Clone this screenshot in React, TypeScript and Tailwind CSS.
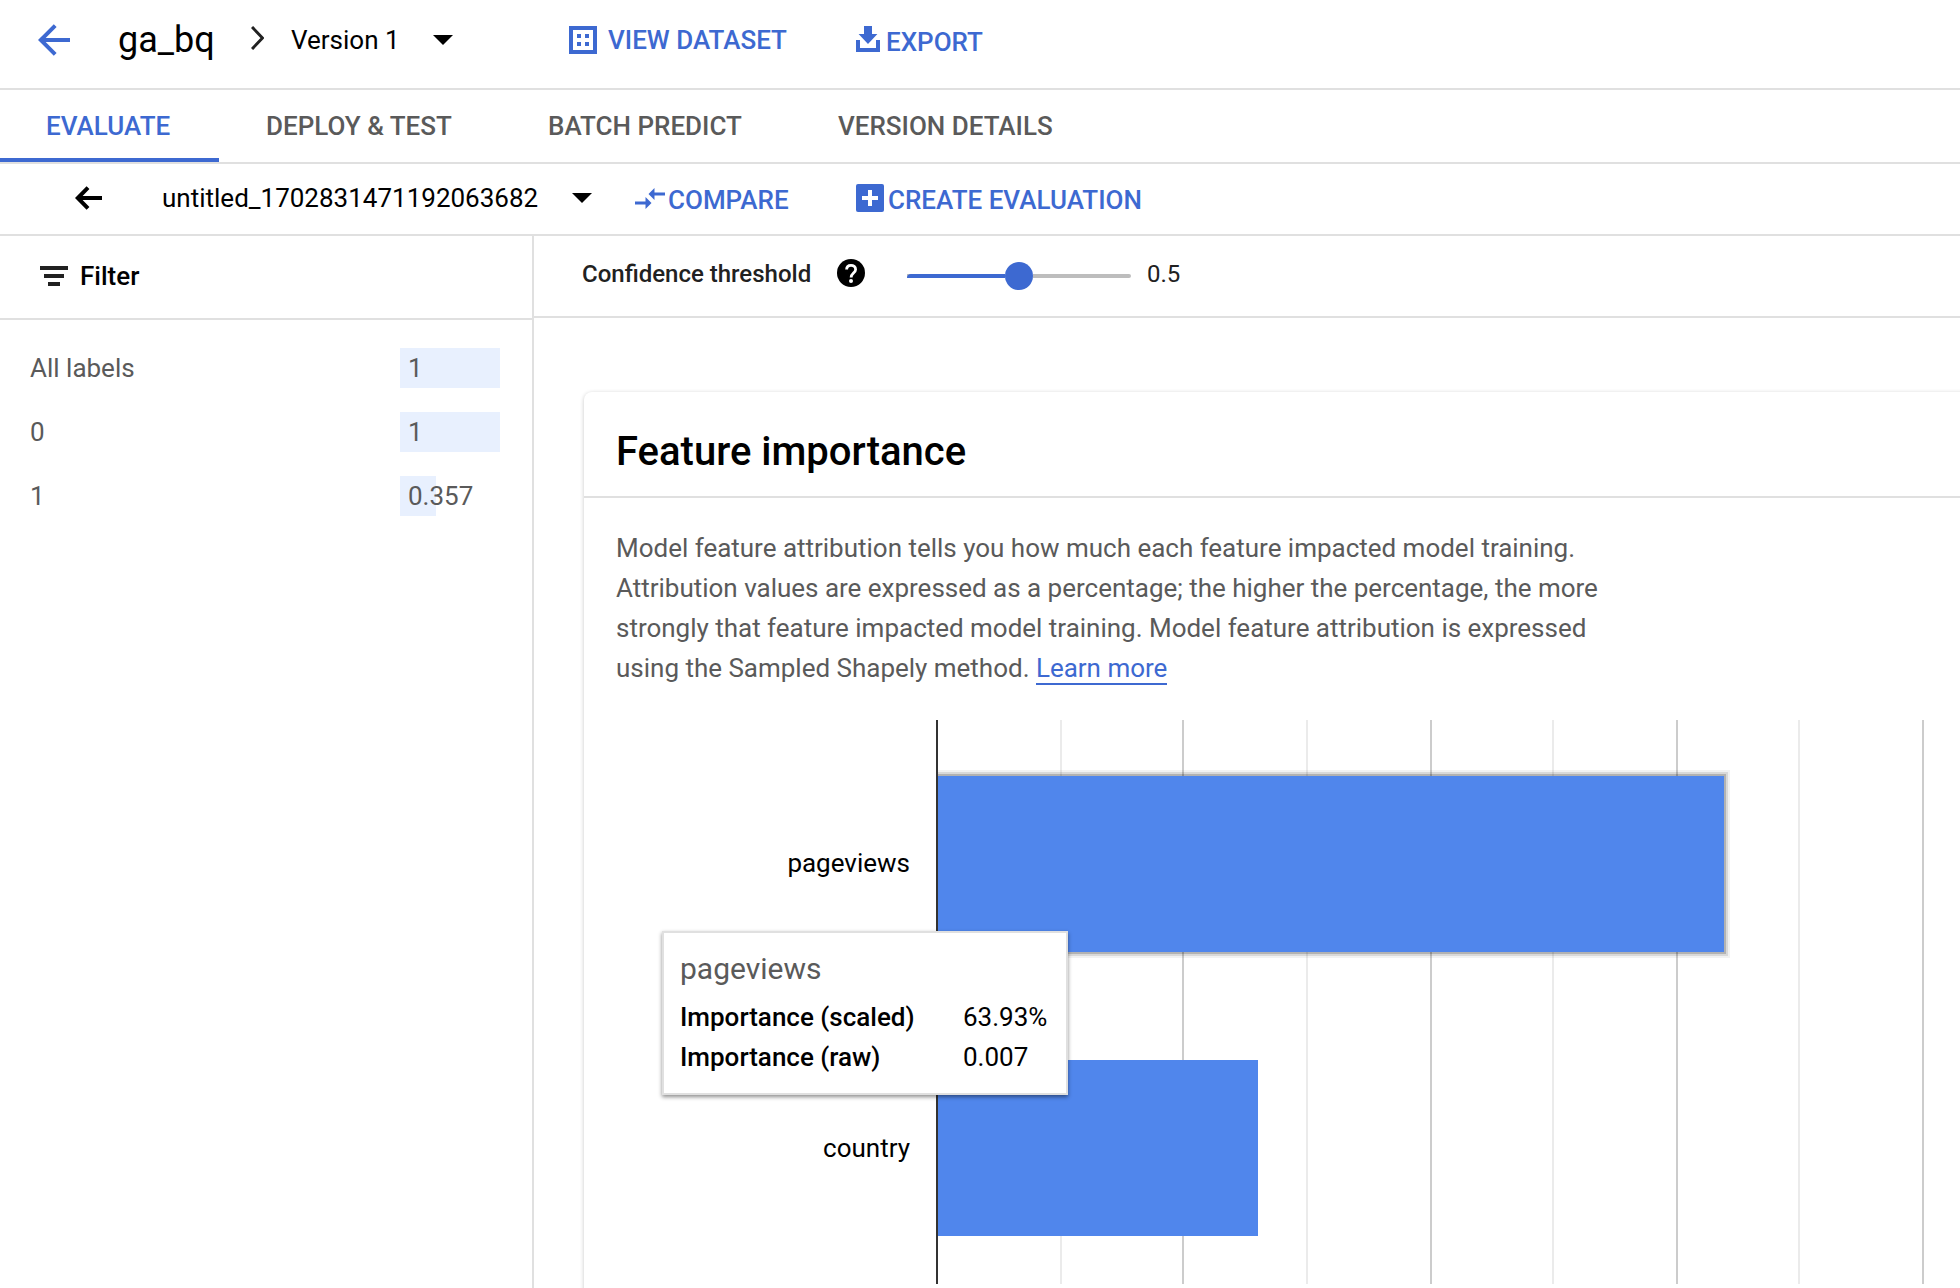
const BLUE = "#3d69d1";

function BackArrow({ className, sw }: { className: string; sw: "thin" | "bold" }) {
  return sw === "thin" ? (
    <svg className={className} viewBox="0 0 32 32" fill="none" stroke="currentColor" strokeWidth="4">
      <path d="M32 16H3M17.2 1.6L2.8 16l14.4 14.4" />
    </svg>
  ) : (
    <svg className={className} viewBox="0 0 27 24" fill="none" stroke="currentColor" strokeWidth="4">
      <path d="M27 12H3M13 1.6L2.8 12 13 22.4" />
    </svg>
  );
}

function Caret({ className }: { className: string }) {
  return (
    <svg className={className} viewBox="0 0 20 10" fill="#000">
      <path d="M0 0h20L10 10z" />
    </svg>
  );
}

function DatasetIcon() {
  return (
    <svg className="h-7 w-7" viewBox="0 0 28 28" fill={BLUE}>
      <path fillRule="evenodd" d="M0 0h28v28H0zM4 4v20h20V4z" />
      <path d="M8 8h4v4H8zM16 8h4v4h-4zM8 16h4v4H8zM16 16h4v4h-4z" />
    </svg>
  );
}

function ExportIcon() {
  return (
    <svg className="h-[26px] w-6" viewBox="0 0 24 26" fill={BLUE}>
      <path d="M8 0h8v8h5.4L12 18 2.6 8H8z" />
      <path d="M0 14h4v8h16v-8h4v12H0z" />
    </svg>
  );
}

function CompareIcon() {
  return (
    <svg className="h-[21px] w-[30px]" viewBox="2 5 20 14" fill={BLUE}>
      <path d="M9.01 14H2v2h7.01v3L13 15l-3.99-4v3zm5.98-1v-3H22V8h-7.01V5L11 9l3.99 4z" />
    </svg>
  );
}

function CreateIcon() {
  return (
    <svg className="h-7 w-7" viewBox="0 0 28 28">
      <rect width="28" height="28" rx="2" fill={BLUE} />
      <path d="M12 6h4v6h6v4h-6v6h-4v-6H6v-4h6z" fill="#fff" />
    </svg>
  );
}

function HelpIcon() {
  return (
    <svg className="h-7 w-7" viewBox="0 0 28 28">
      <circle cx="14" cy="14" r="14" />
      <path
        d="M9.6 10.6C9.6 7.8 11.5 6.3 14 6.3s4.6 1.6 4.6 4.1c0 3.4-4.5 3.9-4.5 8"
        fill="none"
        stroke="#fff"
        strokeWidth="2.8"
      />
      <circle cx="14" cy="22" r="2" fill="#fff" />
    </svg>
  );
}

function Header() {
  return (
    <header className="flex h-[90px] shrink-0 border-b-2 border-[#e0e0e0] pl-[38px]">
      <BackArrow sw="thin" className="mt-6 h-8 w-8 text-[#3d69d1]" />
      <h1 className="mt-[19px] ml-12 w-[133px] text-[36px] leading-[42px]">ga_bq</h1>
      <svg className="mt-[26px] h-6 w-[13px]" viewBox="0 0 13 24" fill="none" stroke="#212121" strokeWidth="3">
        <path d="M1 1l10.5 11L1 23" />
      </svg>
      <span className="mt-5 ml-[27px] w-[142px] leading-10">Version 1</span>
      <Caret className="mt-[35px] h-2.5 w-5" />
      <button className="mt-5 ml-[116px] flex h-10 w-[287px] items-center gap-[11px] font-medium text-[#3d69d1]">
        <DatasetIcon />
        VIEW DATASET
      </button>
      <button className="mt-[22px] flex h-10 gap-1.5 font-medium leading-10 text-[#3d69d1]">
        <span className="mt-1"><ExportIcon /></span>
        EXPORT
      </button>
    </header>
  );
}

function Tabs() {
  return (
    <nav className="flex h-[74px] shrink-0 border-b-2 border-[#e0e0e0] font-medium leading-8 text-[#5a5a5a]">
      <div className="w-[219px] border-b-4 border-[#3d69d1] pt-5 pl-[46px] text-[#3d69d1]">EVALUATE</div>
      <div className="w-[281px] pt-5 pl-[47px]">DEPLOY &amp; TEST</div>
      <div className="w-[338px] pt-5 pl-12">BATCH PREDICT</div>
      <div className="pt-5">VERSION DETAILS</div>
    </nav>
  );
}

function EvaluationBar() {
  return (
    <div className="flex h-[72px] shrink-0 border-b-2 border-[#e0e0e0] pl-[75px]">
      <BackArrow sw="bold" className="mt-[22px] h-6 w-[27px] text-black" />
      <span className="mt-[14px] ml-[60px] w-[410px] leading-10">untitled_1702831471192063682</span>
      <Caret className="mt-[29px] h-2.5 w-5" />
      <button className="mt-4 ml-[43px] flex h-10 w-[221px] gap-[3px] font-medium leading-10 text-[#3d69d1]">
        <span className="mt-2"><CompareIcon /></span>
        COMPARE
      </button>
      <button className="mt-4 flex h-10 gap-1 font-medium leading-10 text-[#3d69d1]">
        <span className="mt-1"><CreateIcon /></span>
        CREATE EVALUATION
      </button>
    </div>
  );
}

const labels = [
  { name: "All labels", value: "1", width: 100 },
  { name: "0", value: "1", width: 100 },
  { name: "1", value: "0.357", width: 36 },
];

function Sidebar() {
  return (
    <aside className="w-[534px] shrink-0 border-r-2 border-[#e0e0e0]">
      <div className="flex h-[84px] border-b-2 border-[#e0e0e0] pl-10">
        <svg className="mt-[30px] h-5 w-7" viewBox="0 0 28 20" fill="#212121">
          <path d="M0 0h28v4H0zM4 8h20v4H4zM8 16h12v4H8z" />
        </svg>
        <span className="mt-5 ml-3 font-medium leading-10">Filter</span>
      </div>
      <ul className="flex flex-col gap-6 pt-7 text-[#5a5a5a]">
        {labels.map((l) => (
          <li key={l.name} className="flex h-10 pl-[30px] leading-10">
            <span className="w-[370px]">{l.name}</span>
            <div className="h-10 bg-[#e8f0fe] pl-2" style={{ width: l.width }}>{l.value}</div>
          </li>
        ))}
      </ul>
    </aside>
  );
}

function Threshold() {
  return (
    <div className="flex h-[82px] shrink-0 border-b-2 border-[#e0e0e0] pl-12 text-[24px] text-[#212121]">
      <span className="mt-[18px] w-[255px] font-medium leading-10">Confidence threshold</span>
      <span className="mt-[23px] text-black"><HelpIcon /></span>
      <div className="mt-[26px] ml-[42px] flex h-7 w-56 items-center">
        <div className="h-1 w-[98px] bg-[#bdbdbd]">
          <div className="h-1 rounded-tl bg-[#3d69d1]" />
        </div>
        <div className="h-7 w-7 rounded-full bg-[#3d69d1]" />
        <div className="h-1 w-[98px] rounded-r bg-[#bdbdbd]" />
      </div>
      <span className="mt-[18px] ml-4 leading-10">0.5</span>
    </div>
  );
}

const gridLines = [
  { x: 326, color: "#ebebeb" },
  { x: 448, color: "#cccccc" },
  { x: 572, color: "#ebebeb" },
  { x: 696, color: "#cccccc" },
  { x: 818, color: "#ebebeb" },
  { x: 942, color: "#cccccc" },
  { x: 1064, color: "#ebebeb" },
  { x: 1188, color: "#cccccc" },
];

/* Horizontal bar chart; the y axis sits at x = 202, the plot area spans y = 0 to 564. */
function Chart() {
  return (
    <svg className="block h-[564px] w-[1226px]" viewBox="0 0 1226 564" shapeRendering="crispEdges">
      {gridLines.map((g) => (
        <rect key={g.x} x={g.x} y="0" width="2" height="564" fill={g.color} />
      ))}
      <rect x="204" y="50" width="792" height="188" fill="#000" fillOpacity="0.05" />
      <rect x="204" y="52" width="790" height="184" fill="#000" fillOpacity="0.1" />
      <rect x="204" y="54" width="788" height="180" fill="#000" fillOpacity="0.18" />
      <rect x="204" y="56" width="786" height="176" fill="#5086ec" />
      <rect x="204" y="340" width="320" height="176" fill="#5086ec" />
      <rect x="202" y="0" width="2" height="564" fill="#333" />
      <g fontSize="26" textAnchor="end" fill="#000">
        <text x="176" y="152">pageviews</text>
        <text x="176" y="437">country</text>
      </g>
    </svg>
  );
}

function Tooltip() {
  return (
    <div className="absolute top-[211px] left-[-72px] h-[164px] w-[406px] border-2 border-[#e0e0e0] bg-white pt-4 pl-4 shadow-[0_2px_4px_rgba(0,0,0,0.45)]">
      <div className="text-[30px] leading-10 text-[#5a5a5a]">pageviews</div>
      <dl className="mt-2 grid grid-cols-[283px_1fr] leading-10">
        <dt className="font-medium">Importance (scaled)</dt>
        <dd>63.93%</dd>
        <dt className="font-medium">Importance (raw)</dt>
        <dd>0.007</dd>
      </dl>
    </div>
  );
}

function FeatureImportance() {
  return (
    <section className="mt-[74px] ml-[50px] h-[1000px] w-[1500px] rounded-tl-[8px] shadow-[0_1px_4px_rgba(0,0,0,0.22)]">
      <h2 className="h-[106px] border-b-2 border-[#e0e0e0] pt-9 pl-8 text-[40px] font-medium leading-[47px]">
        Feature importance
      </h2>
      <p className="pt-[30px] pl-8 leading-10 tracking-[-0.012px] text-[#5a5a5a]">
        Model feature attribution tells you how much each feature impacted model training.
        <br />
        Attribution values are expressed as a percentage; the higher the percentage, the more
        <br />
        strongly that feature impacted model training. Model feature attribution is expressed
        <br />
        using the Sampled Shapely method.{" "}
        <a className="border-b-2 border-[#3d69d1] text-[#3d69d1]">Learn more</a>
      </p>
      <div className="relative mt-8 ml-[150px]">
        <Chart />
        <Tooltip />
      </div>
    </section>
  );
}

export default function App() {
  return (
    <div className="flex h-[1288px] w-[1960px] flex-col overflow-hidden bg-white font-['Roboto',sans-serif] text-[26px] text-black antialiased">
      <Header />
      <Tabs />
      <EvaluationBar />
      <div className="flex min-h-0 flex-1">
        <Sidebar />
        <main className="min-w-0 flex-1 overflow-hidden">
          <Threshold />
          <FeatureImportance />
        </main>
      </div>
    </div>
  );
}
